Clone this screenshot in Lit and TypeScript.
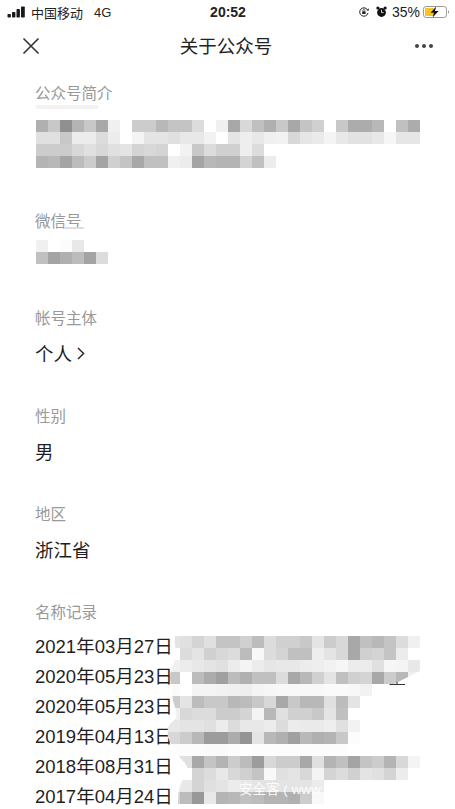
import { LitElement, html, css, svg } from 'lit';
import { customElement, property } from 'lit/decorators.js';

const CELL = 12;

// mosaic rows, two hex digits per cell = gray level
const INTRO = [
  'b0 c8 90 b4 c8 a8 f0 ff cc cc b8 c4 c4 dc ff f0 a8 d8 c0 b0 c8 a8 c4 d0 ff c8 ac ac b8 ff c0 ac',
  'e0 e0 c8 ec ec dc ec ff f4 e4 e4 e0 e8 e8 f2 ff e4 ee e8 f0 f2 d8 e6 ea f4 e8 e2 e2 e8 f6 e6 e6',
  'cc cc cc d8 e0 d8 e0 e4 d4 d8 d4 ff f2 c8 dc d0 d0 ee dc',
  'b4 b8 a4 bc cc a4 d0 c4 a8 c0 c0 f0 ec a4 b8 b4 b4 d4 c0 ec',
];

const WECHAT_ID = ['f0 ff fc e8', 'c0 a4 b0 bc a4 dc'];

// name history cover, rows start at x = 168 and y = 636
const RECORDS = [
  'e4 e0 d4 e0 c4 c4 d0 bc dc d0 d0 c8 e4 cc d8 a8 c0 b8 c4 dc f0',
  'ff dc e4 d0 d8 dc bc f8 dc d4 c0 c0 ee e4 d8 a8 d0 d4 c4 ec ff',
  'f0 ec e8 e4 e0 ec f4 ec e6 e8 e8 ec ee f2 f6 ec ec e0 f6 f4 e8',
  'c8 ff bc ac a0 bc b0 c0 c0 dc a8 b8 d0 e4 c0 d0 d4 a8 cc b8 f0',
  'fa ff f4 f4 f2 f0 ee f4 f6 f8 f8 f8 f8 fa fa f8 f2',
  'cc e4 bc c8 c8 b8 bc c8 d8 a8 c8 b8 b8 e0 bc e4',
  'f0 d8 dc dc cc cc d4 f4 b8 e0 d0 d0 c8 e4 c0 ff',
  'e8 e4 e4 e0 ec dc e8 e8 ec dc ec ea ea ee e0 f2',
  'd8 cc b8 9c 9c ac 94 e4 b8 b0 a0 b8 b0 b4 c8 fc',
  'fc fc fc fa fa fc fe fc fc fc fc fc fc fc fc',
  'e0 e0 a8 c4 b4 cc bc 9c d8 cc cc a8 e0 b4 c0 a4 c4 cc b4 d8 f4',
  'ff ff d4 dc e8 d8 d0 c4 f8 e0 e4 d8 f4 d4 dc d0 e4 e0 d4 ec ff',
  'ec e8 d4 e0 e4 ec e8 e4 e4 e4 e4 e4 ec',
  'd4 bc 98 e8 b4 b8 c0 bc b4 b4 b0 cc f8',
];

const COVER_EDGE: [number, number][] = [
  [176, 630], [174, 640], [176, 650], [175, 662], [170, 672], [170, 682], [173, 690], [172, 698],
  [176, 710], [177, 718], [168, 725], [167, 737], [173, 746], [178, 756], [190, 768], [182, 780],
  [178, 792], [178, 809],
];

const DATES = ['2021年03月27日', '2020年05月23日', '2020年05月23日', '2019年04月13日', '2018年08月31日', '2017年04月24日'];

function smoothEdge(points: [number, number][]) {
  let d = `M440 630 L${points[0][0]} ${points[0][1]}`;
  for (let i = 1; i < points.length - 1; i++) {
    const [x, y] = points[i];
    const [nx, ny] = points[i + 1];
    d += ` Q${x} ${y} ${(x + nx) / 2} ${(y + ny) / 2}`;
  }
  const last = points[points.length - 1];
  return `${d} L${last[0]} ${last[1]} L440 809 Z`;
}

const grayRows = (rows: string[]) => rows.map((r) => r.split(' ').map((v) => `#${v}${v}${v}`));

@customElement('pixel-block')
export class PixelBlock extends LitElement {
  static styles = css`
    :host {
      display: block;
    }
    .row {
      display: flex;
      height: 12px;
    }
    .cell {
      width: 12px;
      height: 12px;
    }
  `;

  @property({ type: Array }) rows: string[] = [];

  render() {
    return html`${grayRows(this.rows).map(
      (row) => html`<div class="row">
        ${row.map((c) => html`<div class="cell" style="background:${c}"></div>`)}
      </div>`
    )}`;
  }
}

@customElement('app-root')
export class AppRoot extends LitElement {
  static styles = css`
    :host {
      display: block;
      font-family: 'Liberation Sans', 'Noto Sans CJK SC', sans-serif;
      color: #1f1f1f;
    }
    .page {
      position: relative;
      height: 809px;
      overflow: hidden;
      background: #fff;
    }
    .status {
      display: flex;
      align-items: center;
      justify-content: space-between;
      height: 24px;
      padding: 0 5px 0 7px;
      font-size: 13px;
      color: #222;
    }
    .status-left,
    .status-right {
      display: flex;
      align-items: center;
      width: 150px;
    }
    .status-right {
      justify-content: flex-end;
    }
    .carrier {
      margin-left: 5px;
    }
    .net {
      margin-left: 11px;
    }
    .time {
      font-size: 14px;
      font-weight: 700;
      margin-left: -1px;
    }
    .percent {
      font-size: 14px;
      margin: 0 3px 0 5px;
    }
    .lock {
      margin-right: 7px;
    }
    .nav {
      display: flex;
      align-items: center;
      justify-content: space-between;
      height: 44px;
      padding: 0 21px 0 22px;
    }
    .nav-title {
      margin: -2px 2px 0 0;
      font-size: 18.5px;
      color: #222;
    }
    .content {
      padding: 15px 0 0 35px;
    }
    section {
      display: flow-root;
      margin-bottom: 40px;
    }
    .label {
      position: relative;
      height: 22px;
      line-height: 22px;
      font-size: 15.5px;
      color: #999;
    }
    .smudge-intro::after {
      content: '';
      position: absolute;
      left: 1px;
      top: 22px;
      width: 62px;
      height: 4px;
      background: #f2f2f2;
    }
    .smudge-id::after {
      content: '';
      position: absolute;
      left: 30px;
      top: 16px;
      width: 19px;
      height: 2px;
      background: #ddd;
    }
    .intro-text {
      margin: 15px 0 3px 1px;
    }
    .id-text {
      margin: 7px 0 4px 1px;
    }
    .value {
      display: flex;
      align-items: center;
      gap: 5px;
      height: 26px;
      margin-top: 10px;
      font-size: 18.5px;
    }
    .dates {
      margin-top: 8px;
    }
    .date {
      height: 30px;
      line-height: 30px;
      font-size: 18.5px;
      white-space: nowrap;
    }
    .cover {
      position: absolute;
      left: 160px;
      top: 630px;
    }
    .watermark {
      position: absolute;
      left: 239px;
      top: 781px;
      white-space: nowrap;
      font-size: 13.5px;
      line-height: 18px;
      color: rgba(255, 255, 255, 0.92);
    }
  `;

  renderCover() {
    const edge = smoothEdge(COVER_EDGE);
    return html`<svg class="cover" width="295" height="179" viewBox="160 630 295 179">
      <defs><clipPath id="edge"><path d=${edge}></path></clipPath></defs>
      <path d=${edge} fill="#fff"></path>
      <g clip-path="url(#edge)">
        ${grayRows(RECORDS).map((row, r) =>
          row.map(
            (c, i) => svg`<rect x=${168 + i * CELL} y=${636 + r * CELL} width=${CELL} height=${CELL} fill=${c}></rect>`
          )
        )}
      </g>
      <polygon points="422,670 422,684 381,696 372,696 372,695" fill="#fff"></polygon>
      <path d="M389.5 684.5H405M397 682V684" stroke="#333" stroke-width="1" fill="none"></path>
    </svg>`;
  }

  render() {
    return html`
      <div class="page">
        <div class="status">
          <div class="status-left">
            <svg width="19" height="12" viewBox="0 0 19 12" fill="#1a1a1a">
              <rect x="0.5" y="8" width="3.4" height="3.5" rx="0.8"></rect>
              <rect x="5" y="6" width="3.4" height="5.5" rx="0.8"></rect>
              <rect x="9.5" y="3" width="3.4" height="8.5" rx="0.8"></rect>
              <rect x="14" y="0.5" width="3.8" height="11" rx="0.8"></rect>
            </svg>
            <span class="carrier">中国移动</span>
            <span class="net">4G</span>
          </div>
          <span class="time">20:52</span>
          <div class="status-right">
            <svg class="lock" width="10" height="10" viewBox="0 0 10 10" fill="none">
              <path d="M8.8 3.4A4.2 4.2 0 1 0 9 6" stroke="#222" stroke-width="1"></path>
              <path d="M7.6 3.4h2.2V1.2z" fill="#222"></path>
              <rect x="3.2" y="4.2" width="3.4" height="2.8" rx="0.4" fill="#222"></rect>
              <path d="M3.9 4.2V3.4a1 1 0 0 1 2 0v.8" stroke="#222" stroke-width="0.7"></path>
            </svg>
            <svg width="11" height="12" viewBox="0 0 11 12">
              <circle cx="5.5" cy="6.5" r="4.4" fill="#111"></circle>
              <circle cx="1.9" cy="2" r="1.6" fill="#111"></circle>
              <circle cx="9.1" cy="2" r="1.6" fill="#111"></circle>
              <path d="M5.5 3.8V6.6H7.6" stroke="#fff" stroke-width="0.8" fill="none"></path>
            </svg>
            <span class="percent">35%</span>
            <svg width="27" height="12" viewBox="0 0 27 12">
              <rect x="0.5" y="0.5" width="23" height="11" rx="2.6" fill="none" stroke="#9a9a9a"></rect>
              <rect x="2" y="2" width="9" height="8" rx="1" fill="#f7c51e"></rect>
              <path d="M13.2 0.6 L7.6 6.8H11L9.6 11.4L15.6 5H12Z" fill="#111"></path>
              <path d="M25 4.2a2 2 0 0 1 0 3.6z" fill="#9a9a9a"></path>
            </svg>
          </div>
        </div>

        <div class="nav">
          <svg width="18" height="18" viewBox="0 0 18 18" fill="none" stroke="#333" stroke-width="1.6">
            <path d="M1.5 1.5L16.5 16.5M16.5 1.5L1.5 16.5"></path>
          </svg>
          <span class="nav-title">关于公众号</span>
          <svg width="20" height="6" viewBox="0 0 20 6" fill="#444">
            <circle cx="3" cy="3" r="2"></circle>
            <circle cx="10" cy="3" r="2"></circle>
            <circle cx="17" cy="3" r="2"></circle>
          </svg>
        </div>

        <div class="content">
          <section>
            <div class="label smudge-intro">公众号简介</div>
            <pixel-block class="intro-text" .rows=${INTRO}></pixel-block>
          </section>
          <section>
            <div class="label smudge-id">微信号</div>
            <pixel-block class="id-text" .rows=${WECHAT_ID}></pixel-block>
          </section>
          <section>
            <div class="label">帐号主体</div>
            <div class="value">
              个人
              <svg width="8" height="13" viewBox="0 0 8 13" fill="none" stroke="#222" stroke-width="1.4">
                <path d="M1 1L6.6 6.5L1 12"></path>
              </svg>
            </div>
          </section>
          <section>
            <div class="label">性别</div>
            <div class="value">男</div>
          </section>
          <section>
            <div class="label">地区</div>
            <div class="value">浙江省</div>
          </section>
          <section>
            <div class="label">名称记录</div>
            <div class="dates">${DATES.map((d) => html`<div class="date">${d}</div>`)}</div>
          </section>
        </div>

        ${this.renderCover()}
        <div class="watermark">安全客 ( www</div>
      </div>
    `;
  }
}
